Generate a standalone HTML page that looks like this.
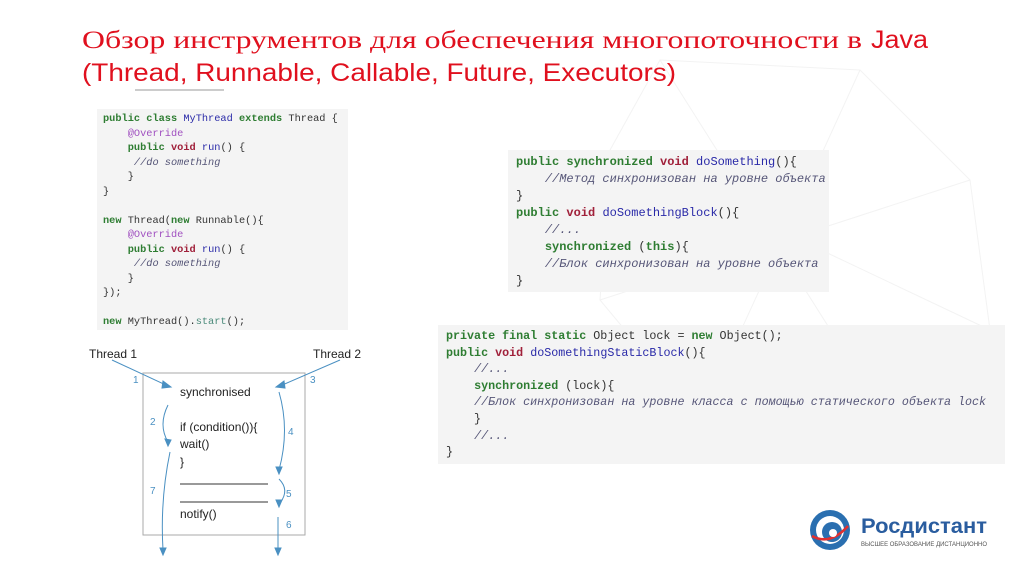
<!DOCTYPE html>
<html><head><meta charset="utf-8"><style>
body{margin:0;width:1024px;height:574px;background:#fff;position:relative;overflow:hidden;font-family:"Liberation Sans",sans-serif}
.code{position:absolute;background:#f4f4f4;font-family:"Liberation Mono",monospace;white-space:pre;color:#333}
.k{color:#2e7d32;font-weight:bold}.v{color:#a0203a;font-weight:bold}.f{color:#2a2aa8}.a{color:#a050c0}.c{color:#557;font-style:italic}.s{color:#4a8a7a}
.l{position:absolute;font-size:12px;color:#222}
.n{position:absolute;font-size:10px;color:#4a90c2}
</style></head><body>
<svg width="1024" height="574" style="position:absolute;left:0;top:0">
<g stroke="#f3f3f3" fill="none" stroke-width="1">
<polygon points="660,60 860,70 970,180 990,330 900,440 700,420 600,300 610,150"/>
<line x1="660" y1="60" x2="900" y2="440"/><line x1="860" y1="70" x2="700" y2="420"/><line x1="610" y1="150" x2="990" y2="330"/><line x1="970" y1="180" x2="600" y2="300"/>
</g>
<text x="82" y="48" font-family="Liberation Serif,serif" font-size="25" fill="#e0101e" textLength="780" lengthAdjust="spacingAndGlyphs">Обзор инструментов для обеспечения многопоточности в</text>
<text x="871" y="48" font-family="Liberation Sans,sans-serif" font-size="25" fill="#e0101e" textLength="57" lengthAdjust="spacingAndGlyphs">Java</text>
<text x="82" y="81" font-family="Liberation Sans,sans-serif" font-size="25" fill="#e0101e" textLength="594" lengthAdjust="spacingAndGlyphs">(Thread, Runnable, Callable, Future, Executors)</text>
<line x1="135" y1="90" x2="224" y2="90" stroke="#bbb" stroke-width="1.5"/>
<g stroke="#4a90c2" fill="none" stroke-width="1">
<rect x="143" y="373" width="162" height="162" stroke="#aaa"/>
<line x1="112" y1="360" x2="168" y2="386"/><polygon points="171,387 163,381 162,388" fill="#4a90c2"/>
<line x1="340" y1="360" x2="280" y2="386"/><polygon points="276,387 284,381 285,388" fill="#4a90c2"/>
<path d="M168 405 Q158 425 168 442"/><polygon points="168,446 165,439 171,440" fill="#4a90c2"/>
<path d="M170 452 Q160 500 163 550"/><polygon points="163,555 160,548 166,548" fill="#4a90c2"/>
<path d="M279 392 Q290 430 279 470"/><polygon points="279,474 276,467 282,467" fill="#4a90c2"/>
<path d="M279 479 Q290 490 280 503"/><polygon points="279,507 276,500 282,500" fill="#4a90c2"/>
<line x1="278" y1="517" x2="278" y2="550"/><polygon points="278,555 275,548 281,548" fill="#4a90c2"/>
<line x1="180" y1="484" x2="268" y2="484" stroke="#333"/><line x1="180" y1="502" x2="268" y2="502" stroke="#333"/>
</g>
<g transform="translate(830,530)">
<circle r="20" fill="#2a6fb0"/><circle r="14" fill="#fff"/><circle cx="2" cy="2" r="10" fill="#2a6fb0"/><path d="M-18 6 Q0 16 18 -4" stroke="#e03030" stroke-width="2.5" fill="none"/><circle cx="3" cy="3" r="4" fill="#fff"/>
</g>
<text x="861" y="533" font-size="21" font-weight="bold" fill="#2a5d9f" textLength="126" lengthAdjust="spacingAndGlyphs">Росдистант</text>
<text x="861" y="546" font-size="6" fill="#555" textLength="126" lengthAdjust="spacingAndGlyphs">ВЫСШЕЕ ОБРАЗОВАНИЕ ДИСТАНЦИОННО</text>
</svg>
<div class="code" style="left:97px;top:109px;width:245px;height:218px;padding:3px 0 0 6px;font-size:10.3px;line-height:14.5px"><span class="k">public class</span> <span class="f">MyThread</span> <span class="k">extends</span> Thread {
    <span class="a">@Override</span>
    <span class="k">public</span> <span class="v">void</span> <span class="f">run</span>() {
     <span class="c">//do something</span>
    }
}

<span class="k">new</span> Thread(<span class="k">new</span> Runnable(){
    <span class="a">@Override</span>
    <span class="k">public</span> <span class="v">void</span> <span class="f">run</span>() {
     <span class="c">//do something</span>
    }
});

<span class="k">new</span> MyThread().<span class="s">start</span>();</div>
<div class="code" style="left:508px;top:150px;width:313px;height:138px;padding:4px 0 0 8px;font-size:12px;line-height:17px"><span class="k">public synchronized</span> <span class="v">void</span> <span class="f">doSomething</span>(){
    <span class="c">//Метод синхронизован на уровне объекта</span>
}
<span class="k">public</span> <span class="v">void</span> <span class="f">doSomethingBlock</span>(){
    <span class="c">//...</span>
    <span class="k">synchronized</span> (<span class="k">this</span>){
    <span class="c">//Блок синхронизован на уровне объекта</span>
}</div>
<div class="code" style="left:438px;top:325px;width:559px;height:136px;padding:3px 0 0 8px;font-size:11.7px;line-height:16.6px"><span class="k">private final static</span> Object lock = <span class="k">new</span> Object();
<span class="k">public</span> <span class="v">void</span> <span class="f">doSomethingStaticBlock</span>(){
    <span class="c">//...</span>
    <span class="k">synchronized</span> (lock){
    <span class="c">//Блок синхронизован на уровне класса с помощью статического объекта lock</span>
    }
    <span class="c">//...</span>
}</div>
<div class="l" style="left:89px;top:347px">Thread 1</div>
<div class="l" style="left:313px;top:347px">Thread 2</div>
<div class="l" style="left:180px;top:385px">synchronised</div>
<div class="l" style="left:180px;top:420px">if (condition()){</div>
<div class="l" style="left:180px;top:437px">wait()</div>
<div class="l" style="left:180px;top:455px">}</div>
<div class="l" style="left:180px;top:507px">notify()</div>
<div class="n" style="left:133px;top:375px">1</div><div class="n" style="left:150px;top:417px">2</div><div class="n" style="left:310px;top:375px">3</div><div class="n" style="left:288px;top:427px">4</div><div class="n" style="left:286px;top:489px">5</div><div class="n" style="left:286px;top:520px">6</div><div class="n" style="left:150px;top:486px">7</div>
</body></html>
